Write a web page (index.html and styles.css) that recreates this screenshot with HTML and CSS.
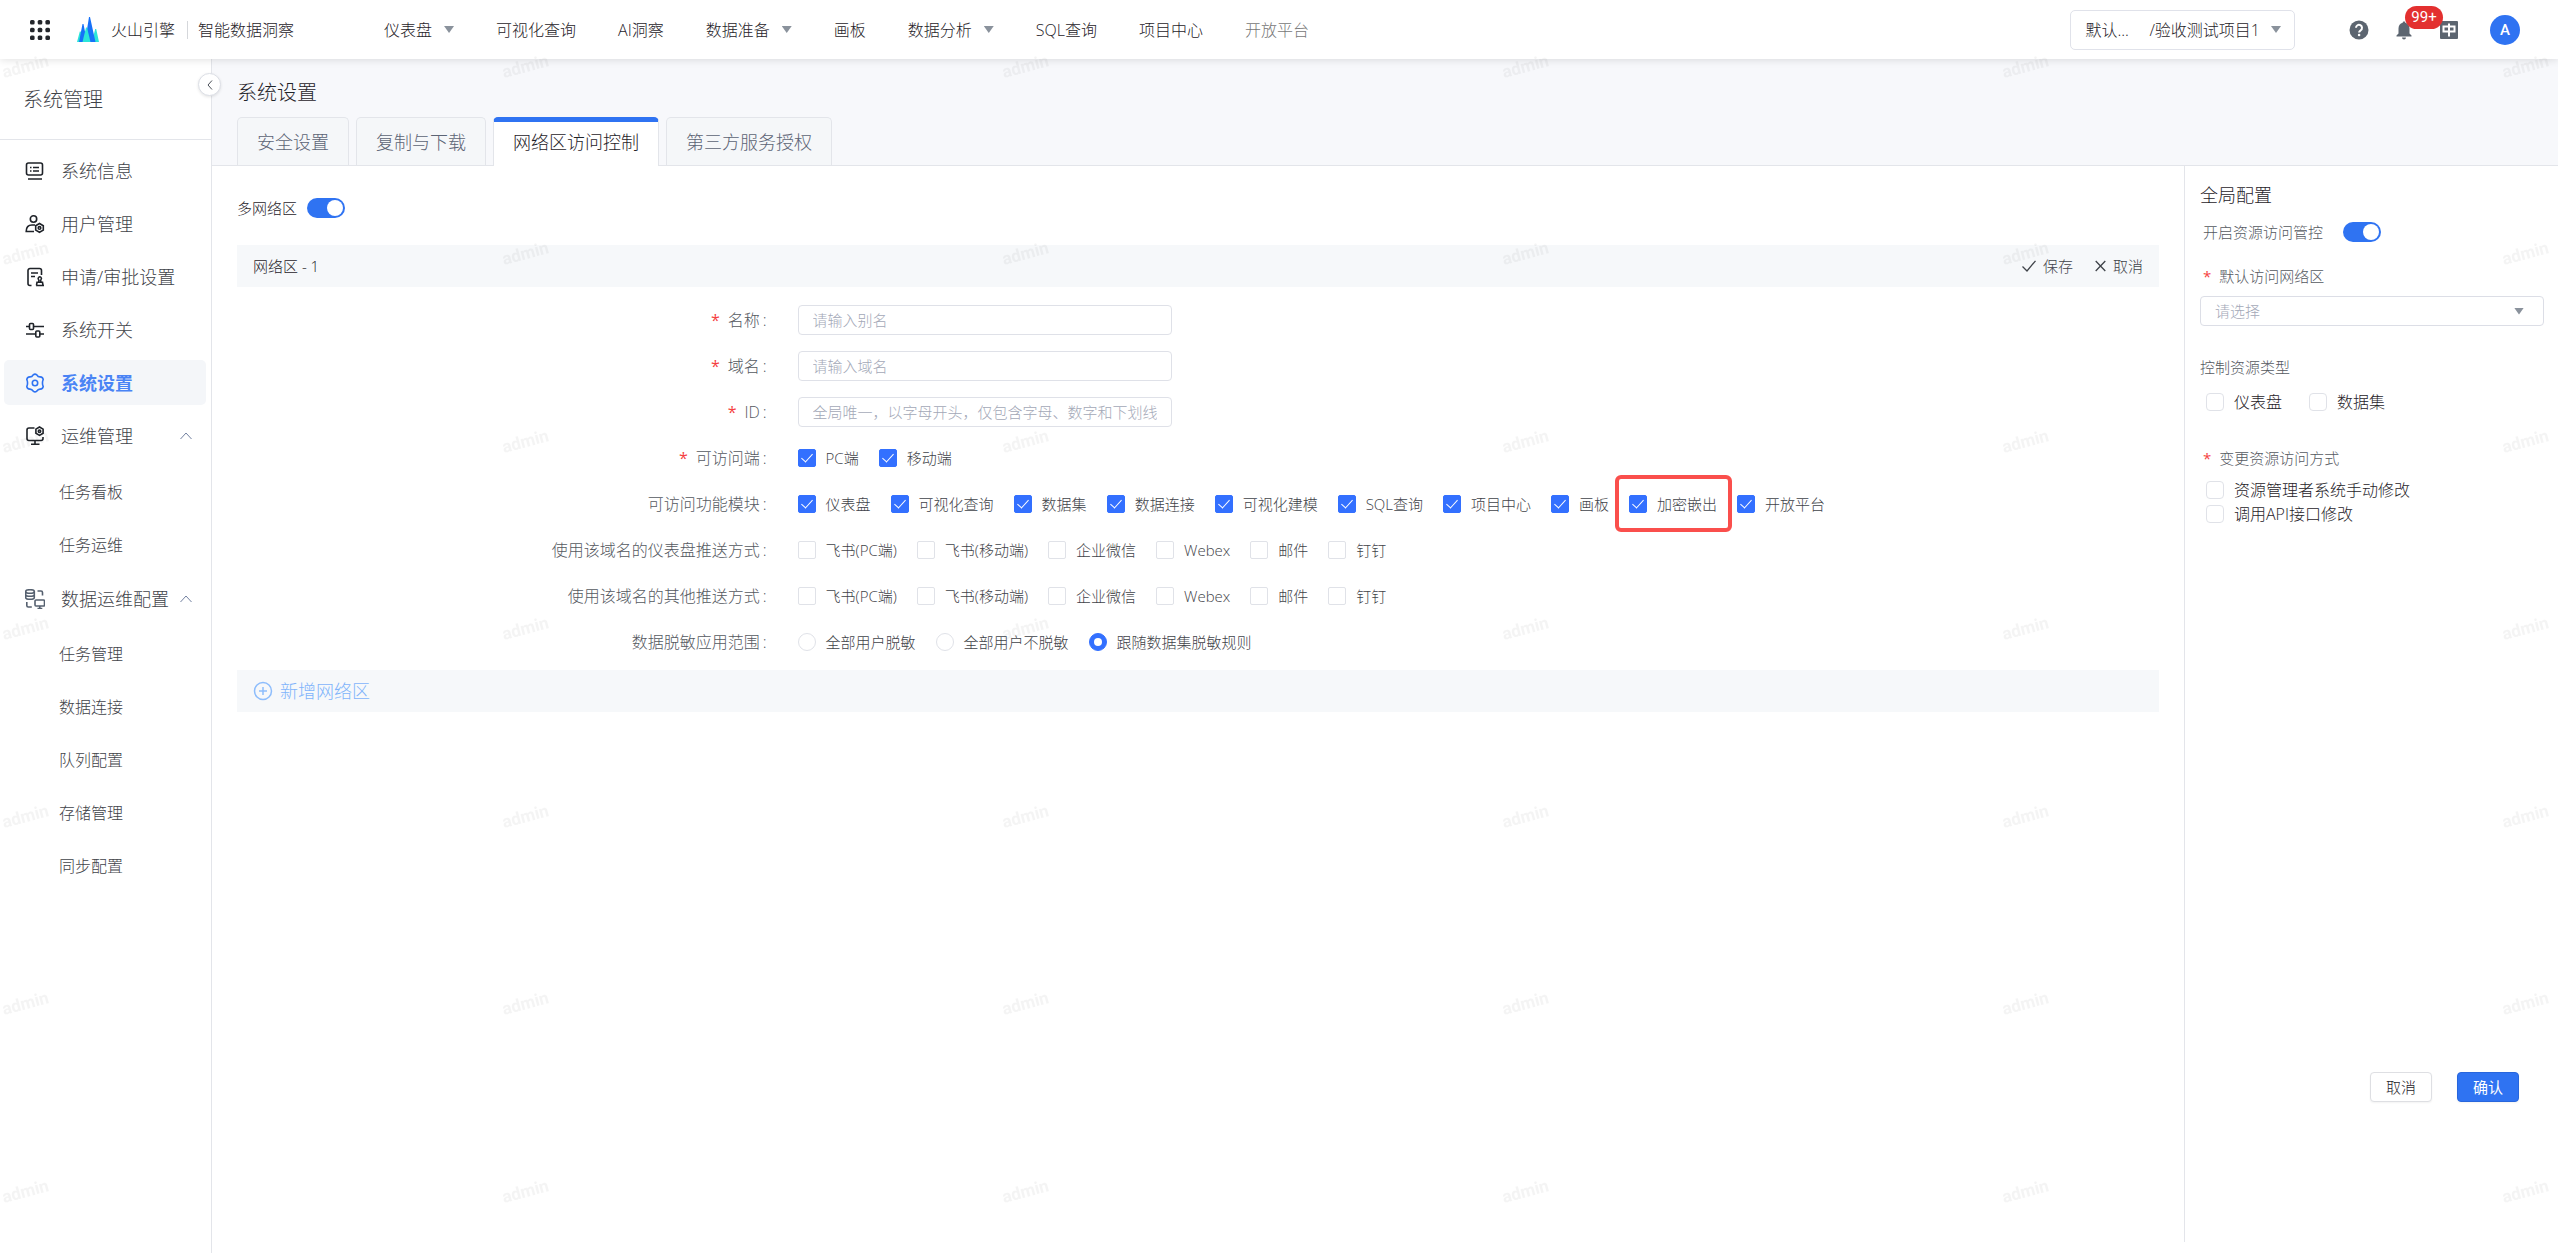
FILE: index.html
```html
<!DOCTYPE html>
<html lang="zh-CN">
<head>
<meta charset="utf-8">
<title>系统设置 - 智能数据洞察</title>
<meta name="viewport" content="width=device-width, initial-scale=1">
<link rel="stylesheet" href="styles.css">
</head>
<body>
<header class="topbar">
  <button class="icon-button apps" type="button" aria-label="应用">
    <svg width="20" height="20" viewBox="0 0 20 20" fill="#23262b"><rect width="4.600" height="4.600" rx="1.500"/><rect x="7.700" width="4.600" height="4.600" rx="1.500"/><rect x="15.400" width="4.600" height="4.600" rx="1.500"/><rect y="7.700" width="4.600" height="4.600" rx="1.500"/><rect x="7.700" y="7.700" width="4.600" height="4.600" rx="1.500"/><rect x="15.400" y="7.700" width="4.600" height="4.600" rx="1.500"/><rect y="15.400" width="4.600" height="4.600" rx="1.500"/><rect x="7.700" y="15.400" width="4.600" height="4.600" rx="1.500"/><rect x="15.400" y="15.400" width="4.600" height="4.600" rx="1.500"/></svg>
  </button>
  <a class="brand" href="#">
    <svg width="22" height="25" viewBox="0 0 22 25"><path fill="#2be5d9" d="M0 25 2.800 14.500h1L6 25zM15 25l3.200-13h1L22 25z"/><path fill="#1671f8" d="M2 25 5.500 7h1L10 25zM8 25 12 0h1l5.500 25z"/><path fill="#2be5d9" d="M5.500 25 9 10.500h1L13.500 25z"/></svg>
    <span>火山引擎</span>
  </a>
  <span class="product">智能数据洞察</span>
  <nav class="mainnav">
    <a href="#">仪表盘<i class="caret"></i></a>
    <a href="#">可视化查询</a>
    <a href="#">AI洞察</a>
    <a href="#">数据准备<i class="caret"></i></a>
    <a href="#">画板</a>
    <a href="#">数据分析<i class="caret"></i></a>
    <a href="#">SQL查询</a>
    <a href="#">项目中心</a>
    <a class="muted" href="#">开放平台</a>
  </nav>
  <button class="project" type="button"><span class="space">默认...</span><span>/验收测试项目1</span><i class="caret"></i></button>
  <div class="tools">
    <button class="icon-button" type="button" aria-label="帮助">
      <svg width="20" height="20" viewBox="0 0 20 20"><circle cx="10" cy="10" r="9.500" fill="#5c6570"/><path d="M7 7.800a3 3 0 1 1 4.700 2.500c-1 .7-1.600 1.100-1.600 2.200" fill="none" stroke="#fff" stroke-width="2"/><circle cx="10.100" cy="15" r="1.300" fill="#fff"/></svg>
    </button>
    <button class="icon-button bell" type="button" aria-label="通知">
      <svg width="16" height="20" viewBox="0 0 16 20" fill="#5c6570"><path d="M8 1.500c.8 0 1.300.5 1.300 1.300C12 3.400 13.500 5.800 13.500 8.500v5l2 2v1H.5v-1l2-2v-5c0-2.700 1.500-5.100 4.200-5.700 0-.8.500-1.300 1.300-1.300z"/><path d="M6 17.500h4a2 2 0 0 1-4 0z"/></svg>
      <span class="badge">99+</span>
    </button>
    <button class="icon-button lang" type="button" aria-label="语言">
      <svg width="18" height="18" viewBox="0 0 18 18"><rect width="18" height="18" rx="1" fill="#5c6570"/><path d="M3.500 5.500h11v5h-11zM9 2.500v13" fill="none" stroke="#fff" stroke-width="2"/></svg>
    </button>
    <button class="avatar" type="button">A</button>
  </div>
</header>

<div class="shell">
  <aside class="sidebar">
    <button class="collapse" type="button" aria-label="收起"><svg width="6" height="10" viewBox="0 0 6 10"><path d="M5 .5 1 5l4 4.500" fill="none" stroke="#4b5058"/></svg></button>
    <h2 class="sidebar-title">系统管理</h2>
    <ul class="menu">
      <li><a class="item" href="#"><svg class="ico" viewBox="0 0 20 20"><rect x="1.500" y="2" width="16" height="12" rx="2"/><path d="M3 18h14M5 6.500h1.500M8 6.500h6M5 10h1.500M8 10h6"/></svg>系统信息</a></li>
      <li><a class="item" href="#"><svg class="ico" viewBox="0 0 20 20"><circle cx="8.500" cy="5" r="3.200"/><path d="M9 17.500H1.200c0-4 2-6.500 5.800-6.500h3"/><path d="m14.500 9.500 3.800 2.200v4.400l-3.800 2.200-3.800-2.200v-4.400z"/><circle cx="14.500" cy="13.900" r="1.300"/></svg>用户管理</a></li>
      <li><a class="item" href="#"><svg class="ico" viewBox="0 0 20 20"><path d="M6.500 18.500H5a2 2 0 0 1-2-2v-13a2 2 0 0 1 2-2h9.500a2 2 0 0 1 2 2V8M6 6h7M6 9.500h4"/><path d="M11 18.500h8M11.500 18.300l.5-3h5.500l.5 3M13.500 15c.8-1 .6-1.800 0-2.600a1.600 1.600 0 1 1 2.600 0c-.6.800-.8 1.600 0 2.600"/></svg>申请/审批设置</a></li>
      <li><a class="item" href="#"><svg class="ico" viewBox="0 0 20 20"><path d="M1 6.500h3.500M8.500 6.500H19M1 14h9.500M15 14h4"/><rect x="4.500" y="3.500" width="4" height="6" rx="1"/><rect x="10.800" y="11" width="4" height="6" rx="1"/></svg>系统开关</a></li>
      <li><a class="item active" href="#"><svg class="ico" viewBox="0 0 20 20"><path d="M8.200 1.800Q10 .4 11.800 1.800c.8 1.500 1.800 2.200 3.400 2.100q2.700.1 3 2.700c-1 1.600-1 5.200 0 6.800q-.3 2.600-3 2.700c-1.600-.1-2.600.6-3.400 2.100Q10 19.600 8.200 18.200c-.8-1.500-1.800-2.200-3.400-2.100q-2.700-.1-3-2.700c1-1.600 1-5.200 0-6.800q.3-2.600 3-2.700c1.600.1 2.600-.6 3.400-2.100z"/><circle cx="10" cy="10" r="2.700"/></svg>系统设置</a></li>
      <li>
        <a class="item" href="#"><svg class="ico" viewBox="0 0 20 20"><path d="M9.500 2H4a2 2 0 0 0-2 2v8.500a2 2 0 0 0 2 2h12a2 2 0 0 0 2-2V11M10 14.500V18M6 18.200h8.500"/><path d="m14.500 1 3.600 2.100v4.200l-3.600 2.100-3.600-2.100V3.100z"/><circle cx="14.500" cy="5.200" r="1.200"/></svg>运维管理<svg class="chev" viewBox="0 0 12 8"><path d="m0.500 7 5.500-6 5.500 6"/></svg></a>
        <ul class="submenu">
          <li><a href="#">任务看板</a></li>
          <li><a href="#">任务运维</a></li>
        </ul>
      </li>
      <li>
        <a class="item" href="#"><svg class="ico slate" viewBox="0 0 20 20"><ellipse cx="5" cy="2.500" rx="4.300" ry="1.800"/><path d="M.7 2.500v6C.7 9.500 2.500 10.300 5 10.300s4.300-.8 4.300-1.800v-6M.7 5.500C.7 6.500 2.500 7.300 5 7.300s4.300-.8 4.300-1.800M12.500 2H16a1.500 1.500 0 0 1 1.500 1.500v3M1.800 13v3.500A1.500 1.500 0 0 0 3.300 18h3.500"/><rect x="10" y="11" width="9.500" height="6" rx="1"/><path d="M14.800 17v2.300M12.500 19.500h4.800"/></svg>数据运维配置<svg class="chev" viewBox="0 0 12 8"><path d="m0.500 7 5.500-6 5.500 6"/></svg></a>
        <ul class="submenu">
          <li><a href="#">任务管理</a></li>
          <li><a href="#">数据连接</a></li>
          <li><a href="#">队列配置</a></li>
          <li><a href="#">存储管理</a></li>
          <li><a href="#">同步配置</a></li>
        </ul>
      </li>
    </ul>
  </aside>

  <main class="page">
    <div class="page-head">
      <h1>系统设置</h1>
      <div class="tabs" role="tablist">
        <button type="button" role="tab">安全设置</button>
        <button type="button" role="tab">复制与下载</button>
        <button type="button" role="tab" class="current" aria-selected="true">网络区访问控制</button>
        <button type="button" role="tab">第三方服务授权</button>
      </div>
    </div>
    <div class="columns">
      <section class="zones">
        <label class="multi">多网络区<input class="switch" type="checkbox" role="switch" checked></label>
        <div class="bar">
          <span>网络区 - 1</span>
          <div class="bar-actions">
            <button type="button"><svg width="14" height="12" viewBox="0 0 14 12"><path d="m.5 6.500 4.500 4.500L13.500.8"/></svg>保存</button>
            <button type="button"><svg width="11" height="12" viewBox="0 0 11 12"><path d="m.7 1 9.600 10M10.300 1 .7 11"/></svg>取消</button>
          </div>
        </div>
        <form class="form" id="zone">
          <div class="row"><label class="name required" for="zname">名称</label><input class="text" id="zname" type="text" placeholder="请输入别名"></div>
          <div class="row"><label class="name required" for="zdomain">域名</label><input class="text" id="zdomain" type="text" placeholder="请输入域名"></div>
          <div class="row"><label class="name required" for="zid">ID</label><input class="text" id="zid" type="text" placeholder="全局唯一，以字母开头，仅包含字母、数字和下划线"></div>
          <div class="row" role="group"><span class="name required">可访问端</span>
            <div class="options">
              <label><input type="checkbox" checked>PC端</label>
              <label><input type="checkbox" checked>移动端</label>
            </div></div>
          <div class="row" role="group"><span class="name">可访问功能模块</span>
            <div class="options">
              <label><input type="checkbox" checked>仪表盘</label>
              <label><input type="checkbox" checked>可视化查询</label>
              <label><input type="checkbox" checked>数据集</label>
              <label><input type="checkbox" checked>数据连接</label>
              <label><input type="checkbox" checked>可视化建模</label>
              <label><input type="checkbox" checked>SQL查询</label>
              <label><input type="checkbox" checked>项目中心</label>
              <label><input type="checkbox" checked>画板</label>
              <label class="marked"><input type="checkbox" checked>加密嵌出</label>
              <label><input type="checkbox" checked>开放平台</label>
            </div></div>
          <div class="row" role="group"><span class="name">使用该域名的仪表盘推送方式</span>
            <div class="options">
              <label><input type="checkbox">飞书(PC端)</label>
              <label><input type="checkbox">飞书(移动端)</label>
              <label><input type="checkbox">企业微信</label>
              <label><input type="checkbox">Webex</label>
              <label><input type="checkbox">邮件</label>
              <label><input type="checkbox">钉钉</label>
            </div></div>
          <div class="row" role="group"><span class="name">使用该域名的其他推送方式</span>
            <div class="options">
              <label><input type="checkbox">飞书(PC端)</label>
              <label><input type="checkbox">飞书(移动端)</label>
              <label><input type="checkbox">企业微信</label>
              <label><input type="checkbox">Webex</label>
              <label><input type="checkbox">邮件</label>
              <label><input type="checkbox">钉钉</label>
            </div></div>
          <div class="row" role="radiogroup"><span class="name">数据脱敏应用范围</span>
            <div class="options">
              <label><input type="radio" name="mask">全部用户脱敏</label>
              <label><input type="radio" name="mask">全部用户不脱敏</label>
              <label><input type="radio" name="mask" checked>跟随数据集脱敏规则</label>
            </div></div>
        </form>
        <button class="bar add" type="button"><svg width="20" height="20" viewBox="0 0 20 20"><circle cx="10" cy="10" r="8.500"/><path d="M10 6v8M6 10h8"/></svg>新增网络区</button>
      </section>

      <section class="panel">
        <h2>全局配置</h2>
        <label class="control">开启资源访问管控<input class="switch" type="checkbox" role="switch" checked></label>
        <label class="caption required" for="defzone">默认访问网络区</label>
        <div class="picker">
          <select id="defzone"><option>请选择</option></select>
          <i class="caret"></i>
        </div>
        <p class="caption types">控制资源类型</p>
        <div class="checks inline">
          <label><input type="checkbox">仪表盘</label>
          <label><input type="checkbox">数据集</label>
        </div>
        <p class="caption required ways">变更资源访问方式</p>
        <div class="checks">
          <label><input type="checkbox">资源管理者系统手动修改</label>
          <label><input type="checkbox">调用API接口修改</label>
        </div>
        <div class="buttons">
          <button type="button">取消</button>
          <button type="submit" form="zone" class="primary">确认</button>
        </div>
      </section>
    </div>
  </main>
</div>

<svg class="watermark" aria-hidden="true">
  <defs>
    <pattern id="wm" width="500" height="375" patternUnits="userSpaceOnUse">
      <text transform="translate(4 78) rotate(-15)">admin</text>
      <text transform="translate(4 265) rotate(-15)">admin</text>
    </pattern>
  </defs>
  <rect width="100%" height="100%" fill="url(#wm)"/>
</svg>
</body>
</html>
```
FILE: styles.css
```css
*,
*::before,
*::after {
  box-sizing: border-box;
}

:root {
  --blue: #2f73f2;
  --line: #e3e5ea;
  --soft: #f6f8fa;
}

body {
  position: relative;
  display: flex;
  flex-direction: column;
  min-height: 100vh;
  margin: 0;
  background: #fff;
  color: #1f2329;
  font: 300 16px/24px "Open Sans", "Noto Sans CJK SC", sans-serif;
}

h1, h2, p, ul {
  margin: 0;
  padding: 0;
  list-style: none;
}

a {
  color: inherit;
  text-decoration: none;
}

button, input, select {
  margin: 0;
  color: inherit;
  font: inherit;
}

button {
  padding: 0;
  border: 0;
  background: none;
  cursor: pointer;
}

/* Top bar */

.topbar {
  position: relative;
  z-index: 2;
  display: flex;
  flex: none;
  align-items: center;
  height: 59px;
  padding: 0 38px 0 30px;
  background: #fff;
  box-shadow: 0 1px 8px rgba(0, 0, 0, 0.12);
  white-space: nowrap;
}

.icon-button {
  display: flex;
}

.brand {
  display: flex;
  align-items: center;
  gap: 12px;
  margin-left: 27px;
}

.product {
  display: flex;
  align-items: center;
  margin-left: 12px;
}

.product::before {
  width: 1px;
  height: 18px;
  margin-right: 10px;
  background: #d5d7db;
  content: "";
}

.mainnav {
  display: flex;
  gap: 42px;
  margin: 0 auto 0 90px;
}

.mainnav a {
  display: flex;
  align-items: center;
  gap: 12px;
}

.muted {
  color: #777;
}

.caret {
  width: 10px;
  height: 7px;
  background: #8a929c;
  clip-path: polygon(0 0, 100% 0, 50% 100%);
}

.project {
  display: flex;
  align-items: center;
  height: 40px;
  padding: 0 13px 0 14px;
  border: 1px solid #e0e2ea;
  border-radius: 5px;
}

.project .space {
  width: 64px;
  text-align: left;
}

.project .caret {
  margin-left: 11px;
}

.tools {
  display: flex;
  align-items: center;
  margin-left: 54px;
}

.bell {
  position: relative;
  margin-left: 27px;
}

.badge {
  position: absolute;
  top: -14px;
  left: 9px;
  width: 38px;
  height: 23px;
  border-radius: 12px;
  background: #e3302f;
  color: #fff;
  font: 400 15px/23px Roboto, sans-serif;
  text-align: center;
}

.lang {
  margin-left: 28px;
}

.avatar {
  width: 30px;
  height: 30px;
  margin-left: 32px;
  border-radius: 50%;
  background: var(--blue);
  color: #fff;
  font: 500 15px/30px Roboto, sans-serif;
}

/* Sidebar */

.shell {
  display: flex;
  flex: 1;
}

.sidebar {
  position: relative;
  flex: none;
  width: 212px;
  border-right: 1px solid var(--line);
  color: #3f4349;
}

.collapse {
  position: absolute;
  z-index: 1;
  top: 14px;
  right: -10px;
  display: grid;
  place-items: center;
  width: 23px;
  height: 23px;
  border: 1px solid #dcdfe6;
  border-radius: 50%;
  background: #fff;
  box-shadow: 0 1px 3px rgba(0, 0, 0, 0.1);
}

.sidebar-title {
  height: 81px;
  padding-left: 23px;
  border-bottom: 1px solid var(--line);
  font-size: 20px;
  font-weight: 300;
  line-height: 81px;
}

.menu {
  display: flex;
  flex-direction: column;
  gap: 8px;
  padding: 8px 5px 0 4px;
}

.item {
  display: flex;
  align-items: center;
  height: 45px;
  padding: 0 14px 0 21px;
  border-radius: 5px;
  font-size: 18px;
}

.ico {
  width: 20px;
  height: 20px;
  margin-right: 16px;
  fill: none;
  stroke: #1f2329;
  stroke-width: 1.6;
}

.slate {
  stroke: #55606f;
}

.chev {
  width: 12px;
  height: 8px;
  margin-left: auto;
  fill: none;
  stroke: #7280a0;
}

.item.active {
  background: #f4f6f9;
  color: #4a84f5;
  font-weight: 700;
}

.active .ico {
  stroke: var(--blue);
}

.submenu {
  display: grid;
  gap: 8px;
  padding: 12px 0 0 55px;
}

.submenu a {
  display: block;
  line-height: 45px;
}

.menu li:last-child .submenu {
  padding-top: 11px;
}

/* Page head */

.page {
  display: flex;
  flex: 1;
  flex-direction: column;
  min-width: 0;
}

.page-head {
  padding: 20px 25px 0;
  border-bottom: 1px solid var(--line);
  background: #f7f8fb;
}

h1 {
  margin-bottom: 10px;
  font-size: 20px;
  font-weight: 300;
  line-height: 28px;
}

.tabs {
  display: flex;
  gap: 7px;
}

.tabs button {
  height: 48px;
  padding: 0 19px;
  border: 1px solid var(--line);
  border-bottom: 0;
  border-radius: 5px 5px 0 0;
  background: #f5f7f9;
  color: #5c6475;
  font-size: 18px;
}

.tabs .current {
  height: 49px;
  margin-bottom: -1px;
  padding-bottom: 4px;
  border-top: 5px solid var(--blue);
  background: #fff;
  color: #1f2329;
}

.columns {
  display: flex;
  flex: 1;
}

/* Network zones */

.zones {
  flex: 1;
  min-width: 0;
  padding: 28px 25px 0;
  font-size: 15px;
}

.multi {
  display: flex;
  align-items: center;
  gap: 10px;
  width: max-content;
  height: 28px;
  margin-bottom: 23px;
}

.switch {
  width: 38px;
  height: 20px;
  padding: 2px;
  border-radius: 10px;
  background: var(--blue);
  appearance: none;
}

.switch::before {
  display: block;
  width: 16px;
  height: 16px;
  margin-left: auto;
  border-radius: 50%;
  background: #fff;
  content: "";
}

.bar {
  display: flex;
  align-items: center;
  justify-content: space-between;
  width: 100%;
  height: 42px;
  padding: 0 16px;
  background: var(--soft);
}

.bar-actions {
  display: flex;
  gap: 22px;
  color: #3f4349;
}

.bar-actions button {
  display: flex;
  align-items: center;
  gap: 7px;
}

.bar-actions svg {
  fill: none;
  stroke: #3f4349;
  stroke-width: 1.3;
}

.form {
  padding: 10px 0 5px;
}

.row {
  display: grid;
  grid-template-columns: 7fr 17fr;
  align-items: center;
  height: 46px;
}

.name {
  padding-right: 31px;
  color: #55595f;
  font-size: 16px;
  text-align: right;
}

.name::after {
  margin-left: 3px;
  content: ":";
}

.required::before {
  margin-right: 8px;
  color: #f53f3f;
  font-weight: 400;
  content: "*";
}

.text {
  width: 374px;
  height: 30px;
  padding: 0 14px;
  border: 1px solid #dfe1e8;
  border-radius: 4px;
  background: #fff;
}

.text::placeholder {
  color: #a3a8b7;
}

.options {
  display: flex;
  gap: 20px;
  color: #3f4349;
  white-space: nowrap;
}

.options label,
.checks label {
  position: relative;
  display: flex;
  align-items: center;
  gap: 10px;
}

.options input,
.checks input {
  display: grid;
  flex: none;
  place-items: center;
  width: 18px;
  height: 18px;
  border: 1px solid #e0e2e8;
  border-radius: 2px;
  background: #fff;
  appearance: none;
}

.options input:checked {
  border-color: #3370ff;
  background: #3370ff;
}

.options [type="checkbox"]:checked::before {
  width: 6px;
  height: 11px;
  margin-top: -4px;
  border: solid #fff;
  border-width: 0 1px 1px 0;
  transform: rotate(42deg);
  content: "";
}

.options [type="radio"] {
  border-radius: 50%;
}

.options [type="radio"]:checked::before {
  width: 8px;
  height: 8px;
  border-radius: 50%;
  background: #fff;
  content: "";
}

.marked::after {
  position: absolute;
  inset: -17px -15px -16px -14px;
  border: 4px solid #fa4f4c;
  border-radius: 6px;
  content: "";
}

.add {
  justify-content: flex-start;
  gap: 7px;
  color: #7fb4fb;
  font-size: 18px;
}

.add svg {
  fill: none;
  stroke: #8dbdfc;
  stroke-width: 1.5;
}

/* Global settings */

.panel {
  display: flex;
  flex: none;
  flex-direction: column;
  width: 374px;
  margin-bottom: 11px;
  padding: 15px 14px 140px 15px;
  border-left: 1px solid var(--line);
}

.panel h2 {
  font-size: 18px;
  font-weight: 300;
  line-height: 28px;
}

.control {
  display: flex;
  align-items: center;
  gap: 20px;
  height: 30px;
  margin: 8px 0 17px 3px;
  color: #55595f;
  font-size: 15px;
}

.caption {
  color: #55595f;
  font-size: 15px;
}

.caption.required {
  margin-left: 3px;
}

.picker {
  display: grid;
  align-items: center;
  margin: 8px 0 29px;
}

.picker > * {
  grid-area: 1 / 1;
}

.picker select {
  width: 100%;
  height: 30px;
  padding: 0 14px;
  border: 1px solid #dcdee6;
  border-radius: 4px;
  background: #fff;
  color: #a3a8b7;
  font-size: 15px;
  appearance: none;
}

.picker .caret {
  justify-self: end;
  margin-right: 20px;
  pointer-events: none;
}

.types {
  margin-bottom: 11px;
}

.ways {
  margin: 32px 0 8px;
}

.checks {
  display: grid;
  padding-left: 6px;
}

.checks.inline {
  display: flex;
  gap: 27px;
}

.checks input {
  border-radius: 4px;
}

.buttons {
  display: flex;
  justify-content: flex-end;
  gap: 25px;
  margin-top: auto;
  padding-right: 25px;
}

.buttons button {
  width: 62px;
  height: 30px;
  border: 1px solid #dedfe3;
  border-radius: 4px;
  background: #fff;
  box-shadow: 0 1px 2px rgba(0, 0, 0, 0.05);
  font-size: 15px;
}

.buttons .primary {
  border-color: #2866dc;
  background: var(--blue);
  color: #fff;
  font-weight: 400;
}

/* Viewer name repeated over the whole page */

.watermark {
  position: absolute;
  z-index: 3;
  inset: 0;
  width: 100%;
  height: 100%;
  pointer-events: none;
}

.watermark text {
  fill: rgba(0, 0, 0, 0.045);
  font: 700 17px Roboto, sans-serif;
}
```
